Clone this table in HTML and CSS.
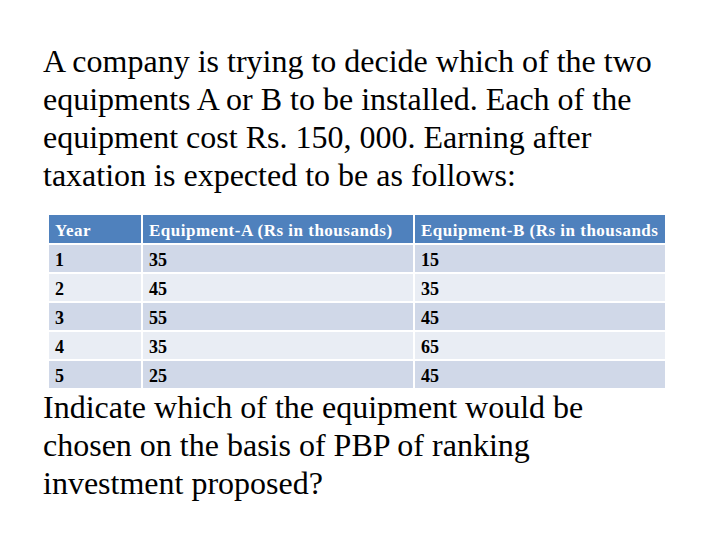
FILE: index.html
```html
<!DOCTYPE html>
<html>
<head>
<meta charset="utf-8">
<link rel="stylesheet" href="styles.css">
</head>
<body>
<div class="slide">
  <p class="para top">A company is trying to decide which of the two equipments A or B to be installed. Each of the equipment cost Rs. 150, 000. Earning after taxation is expected to be as follows:</p>
  <table class="data">
    <colgroup><col class="c1"><col class="c2"><col class="c3"></colgroup>
    <thead>
      <tr><th>Year</th><th>Equipment-A (Rs in thousands)</th><th>Equipment-B (Rs in thousands</th></tr>
    </thead>
    <tbody>
      <tr class="odd"><td>1</td><td>35</td><td>15</td></tr>
      <tr class="even"><td>2</td><td>45</td><td>35</td></tr>
      <tr class="odd"><td>3</td><td>55</td><td>45</td></tr>
      <tr class="even"><td>4</td><td>35</td><td>65</td></tr>
      <tr class="odd last"><td>5</td><td>25</td><td>45</td></tr>
    </tbody>
  </table>
  <p class="para bottom">Indicate which of the equipment would be chosen on the basis of PBP of ranking investment proposed?</p>
</div>
</body>
</html>
```
FILE: styles.css
```css
html, body {
  margin: 0;
  padding: 0;
  background: #ffffff;
}
.slide {
  width: 720px;
  height: 540px;
  padding: 42px 0 0 43px;
  box-sizing: border-box;
  font-family: "Liberation Serif", "Times New Roman", serif;
  color: #000;
}
.para {
  margin: 0;
  font-size: 32px;
  line-height: 38px;
  width: 640px;
}
.top {
  margin-bottom: 21px;
}
.data {
  margin-left: 6px;
  border-collapse: separate;
  border-spacing: 0;
  width: 616px;
  table-layout: fixed;
  font-size: 17px;
}
.c1 { width: 94px; }
.c2 { width: 272px; }
.c3 { width: 250px; }
.data th, .data td {
  border-right: 2px solid #ffffff;
  border-bottom: 2px solid #ffffff;
  text-align: left;
  padding: 0 0 0 6px;
  white-space: nowrap;
  overflow: hidden;
  font-weight: bold;
  box-sizing: content-box;
}
.data th:last-child, .data td:last-child { border-right: 0; }
.data th {
  background: #4f81bd;
  color: #ffffff;
  height: 24px;
  padding-top: 4px;
  letter-spacing: 0.5px;
}
.data td {
  height: 25px;
  padding-top: 2px;
  font-size: 18px;
  line-height: 20px;
}
.data tr.last td { border-bottom: 0; }
.odd td { background: #d0d8e8; }
.even td { background: #e9edf4; }
.bottom {
  margin-top: 0;
  width: 560px;
}
```
